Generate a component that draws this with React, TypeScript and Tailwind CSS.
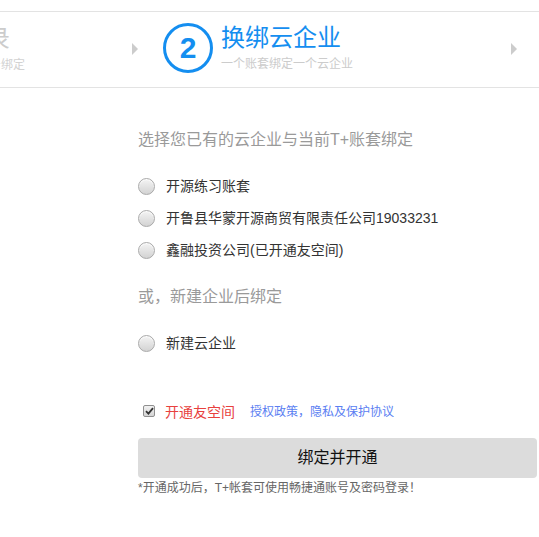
import React from "react";

const font = { fontFamily: '"Liberation Sans", Arial, "Noto Sans CJK SC", sans-serif' };

function Arrow() {
  return (
    <div className="w-0 h-0 border-y-[6px] border-y-transparent border-l-[6px] border-l-[#cccccc]" />
  );
}

function Radio({ label }: { label: string }) {
  return (
    <div className="flex items-center h-[32px]">
      <span className="w-[17px] h-[17px] rounded-full border border-[#a9a9a9] bg-gradient-to-b from-[#f4f4f4] to-[#d3d3d3] shadow-[inset_0_1px_1px_rgba(255,255,255,0.9)]" />
      <span className="ml-[11px] text-[14px] leading-[20px] text-[#333333]">{label}</span>
    </div>
  );
}

export default function App() {
  return (
    <div className="w-[539px] h-[537px] bg-white overflow-hidden" style={font}>
      <div className="pt-[11px]">
        <div className="h-[77px] border-y border-[#e3e3e3] flex items-center">
          <div className="w-[26px] overflow-hidden flex flex-col items-end whitespace-nowrap -mt-[2px]">
            <div className="text-[24px] leading-[28px] text-[#cccccc] pr-[16px]">登录</div>
            <div className="text-[12px] leading-[16px] text-[#d2d2d2] mt-[4px] pr-[1px]">账号绑定</div>
          </div>
          <div className="ml-[106px] -mt-[2px]">
            <Arrow />
          </div>
          <div className="ml-[25px] w-[50px] h-[50px] rounded-full border-[3px] border-[#148ef0] flex items-center justify-center -mt-[3px]">
            <span className="text-[30px] font-bold text-[#148ef0] leading-none">2</span>
          </div>
          <div className="ml-[8px] flex flex-col -mt-[3px]">
            <div className="text-[24px] leading-[28px] text-[#148ef0]">换绑云企业</div>
            <div className="text-[12px] leading-[16px] text-[#cccccc] mt-[4px]">一个账套绑定一个云企业</div>
          </div>
          <div className="ml-auto mr-[22px] -mt-[2px]">
            <Arrow />
          </div>
        </div>
      </div>

      <div className="pl-[138px] pr-[2px]">
        <div className="mt-[41px] text-[16px] leading-[22px] text-[#9a9a9a]">选择您已有的云企业与当前T+账套绑定</div>
        <div className="mt-[19px] flex flex-col">
          <Radio label="开源练习账套" />
          <Radio label="开鲁县华蒙开源商贸有限责任公司19033231" />
          <Radio label="鑫融投资公司(已开通友空间)" />
        </div>
        <div className="mt-[20px] text-[16px] leading-[22px] text-[#9a9a9a]">或，新建企业后绑定</div>
        <div className="mt-[19px]">
          <Radio label="新建云企业" />
        </div>

        <div className="mt-[43px] h-[20px] flex items-center">
          <span className="ml-[5px] w-[12px] h-[12px] rounded-[2px] border border-[#8f8f8f] bg-gradient-to-b from-[#f2f2f2] to-[#d4d4d4] flex items-center justify-center -mt-[2px]">
            <svg width="9" height="8" viewBox="0 0 9 8">
              <path d="M1 4.2 L3.4 6.6 L8 1.2" fill="none" stroke="#333" strokeWidth="1.8" />
            </svg>
          </span>
          <span className="ml-[10px] text-[14px] leading-[20px] text-[#e8413e]">开通友空间</span>
          <span className="ml-[15px] text-[12px] leading-[20px] text-[#5a7ef2]">授权政策，隐私及保护协议</span>
        </div>

        <div className="mt-[16px] w-[399px] h-[40px] rounded-[4px] bg-[#dcdcdc] flex items-center justify-center">
          <span className="text-[16px] text-[#111111]">绑定并开通</span>
        </div>
        <div className="mt-[2px] text-[12px] leading-[16px] text-[#666666]">*开通成功后，T+帐套可使用畅捷通账号及密码登录！</div>
      </div>
    </div>
  );
}
